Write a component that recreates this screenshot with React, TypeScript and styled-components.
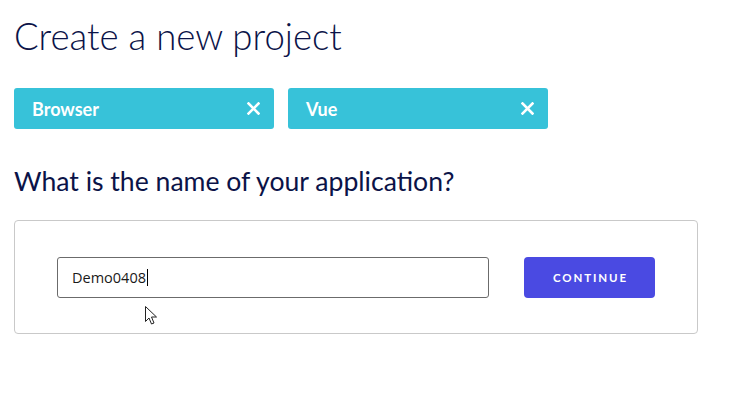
import React from "react";
import styled, { createGlobalStyle } from "styled-components";

const Global = createGlobalStyle`
  html, body { margin: 0; padding: 0; background: #ffffff; }
  body { font-family: Lato, "Open Sans", sans-serif; color: #0b1348; }
`;

const Page = styled.div`
  position: relative;
  padding: 14px 14px 0 14px;
  width: 755px;
  height: 419px;
  box-sizing: border-box;
`;

const Title = styled.h1`
  margin: 0;
  font-family: Lato, sans-serif;
  font-weight: 300;
  font-size: 36.6px;
  line-height: 44px;
  color: #0b1348;
`;

const Chips = styled.div`
  display: flex;
  gap: 14px;
  margin-top: 30px;
`;

const Chip = styled.div`
  display: flex;
  align-items: center;
  justify-content: space-between;
  width: 260px;
  height: 41px;
  box-sizing: border-box;
  padding: 0 14px 0 18px;
  background: #37c2d9;
  border-radius: 3px;
  color: #ffffff;
  font-family: Lato, sans-serif;
  font-weight: 700;
  font-size: 18px;
`;

const ChipClose = styled.svg`
  width: 13px;
  height: 13px;
  display: block;
`;

const Question = styled.h2`
  margin: 36px 0 0 0;
  font-family: Lato, sans-serif;
  font-weight: 400;
  font-size: 26.6px;
  line-height: 32px;
  color: #0b1348;
`;

const Card = styled.div`
  margin-top: 23px;
  width: 684px;
  height: 114px;
  box-sizing: border-box;
  border: 1px solid #c9c9c9;
  border-radius: 4px;
  display: flex;
  align-items: center;
  padding: 0 41px 0 42px;
  gap: 35px;
`;

const Field = styled.div`
  width: 432px;
  height: 41px;
  box-sizing: border-box;
  border: 1px solid #6b6b6b;
  border-radius: 3px;
  display: flex;
  align-items: center;
  padding-left: 14px;
  font-family: "Open Sans", sans-serif;
  font-size: 14.5px;
  color: #1a1a1a;
`;

const Caret = styled.span`
  display: inline-block;
  width: 1px;
  height: 17px;
  background: #000;
  margin-left: 1px;
`;

const ContinueButton = styled.button`
  width: 131px;
  height: 41px;
  border: none;
  border-radius: 4px;
  background: #4a4ae2;
  color: #ffffff;
  font-family: Lato, sans-serif;
  font-weight: 700;
  font-size: 11.5px;
  letter-spacing: 1.9px;
  padding: 0;
  text-indent: 2px;
  cursor: pointer;
`;

const Pointer = styled.svg`
  position: absolute;
  left: 145px;
  top: 306px;
  width: 14px;
  height: 20px;
`;

const CloseIcon = () => (
  <ChipClose viewBox="0 0 13 13">
    <path d="M1.5 1.5 L11.5 11.5 M11.5 1.5 L1.5 11.5" stroke="#fff" strokeWidth="2.6" strokeLinecap="square" />
  </ChipClose>
);

export default function App() {
  return (
    <>
      <Global />
      <Page>
        <Title>Create a new project</Title>
        <Chips>
          <Chip>
            <span>Browser</span>
            <CloseIcon />
          </Chip>
          <Chip>
            <span>Vue</span>
            <CloseIcon />
          </Chip>
        </Chips>
        <Question>What is the name of your application?</Question>
        <Card>
          <Field>
            Demo0408
            <Caret />
          </Field>
          <ContinueButton>CONTINUE</ContinueButton>
        </Card>
        <Pointer viewBox="0 0 14 20">
          <path
            d="M0.5 0.5 L0.5 15.5 L4 12 L6.5 18 L9 17 L6.5 11 L11.5 11 Z"
            fill="#fff"
            stroke="#222"
            strokeWidth="1"
            strokeLinejoin="miter"
          />
        </Pointer>
      </Page>
    </>
  );
}
